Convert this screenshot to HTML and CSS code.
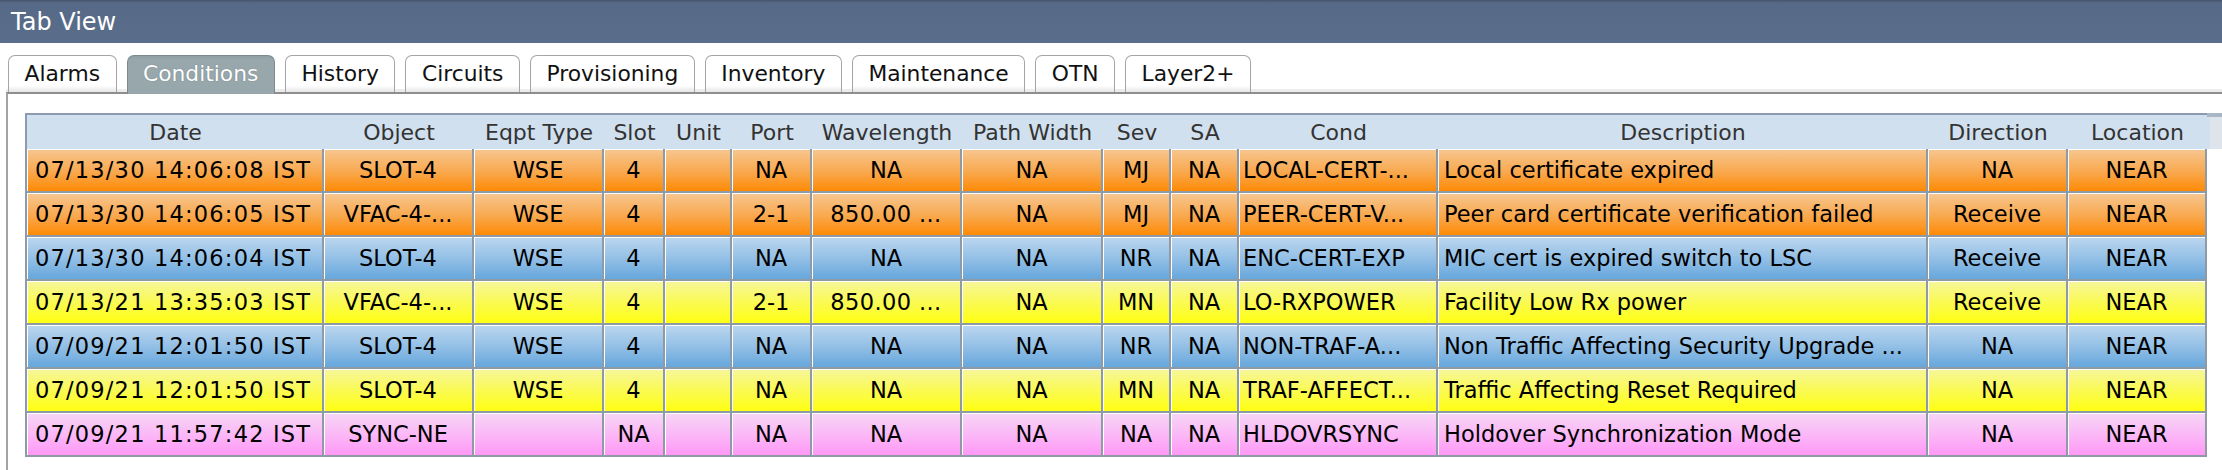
FILE: index.html
```html
<!DOCTYPE html>
<html>
<head>
<meta charset="utf-8">
<title>Tab View</title>
<link rel="stylesheet" href="styles.css">
</head>
<body>
<div class="window">
  <div class="titlebar">Tab View</div>
  <div class="tabs">
    <div class="tab">Alarms</div>
    <div class="tab selected">Conditions</div>
    <div class="tab">History</div>
    <div class="tab">Circuits</div>
    <div class="tab">Provisioning</div>
    <div class="tab">Inventory</div>
    <div class="tab">Maintenance</div>
    <div class="tab">OTN</div>
    <div class="tab">Layer2+</div>
  </div>
  <div class="panel">
    <div class="tablewrap">
      <table class="grid">
        <colgroup>
          <col class="c-date"><col class="c-object"><col class="c-eqpt"><col class="c-slot"><col class="c-unit"><col class="c-port"><col class="c-wave"><col class="c-path"><col class="c-sev"><col class="c-sa"><col class="c-cond"><col class="c-desc"><col class="c-dir"><col class="c-loc">
        </colgroup>
        <thead>
          <tr>
            <th>Date</th><th>Object</th><th>Eqpt Type</th><th>Slot</th><th>Unit</th><th>Port</th><th>Wavelength</th><th>Path Width</th><th>Sev</th><th>SA</th><th>Cond</th><th>Description</th><th>Direction</th><th>Location</th>
          </tr>
        </thead>
        <tbody>
          <tr class="mj">
            <td class="date">07/13/30 14:06:08 IST</td><td>SLOT-4</td><td>WSE</td><td>4</td><td></td><td>NA</td><td>NA</td><td>NA</td><td>MJ</td><td>NA</td><td class="left">LOCAL-CERT-...</td><td class="desc">Local certificate expired</td><td>NA</td><td>NEAR</td>
          </tr>
          <tr class="mj">
            <td class="date">07/13/30 14:06:05 IST</td><td>VFAC-4-...</td><td>WSE</td><td>4</td><td></td><td>2-1</td><td class="num">850.00 ...</td><td>NA</td><td>MJ</td><td>NA</td><td class="left">PEER-CERT-V...</td><td class="desc">Peer card certificate verification failed</td><td>Receive</td><td>NEAR</td>
          </tr>
          <tr class="nr">
            <td class="date">07/13/30 14:06:04 IST</td><td>SLOT-4</td><td>WSE</td><td>4</td><td></td><td>NA</td><td>NA</td><td>NA</td><td>NR</td><td>NA</td><td class="left">ENC-CERT-EXP</td><td class="desc">MIC cert is expired switch to LSC</td><td>Receive</td><td>NEAR</td>
          </tr>
          <tr class="mn">
            <td class="date">07/13/21 13:35:03 IST</td><td>VFAC-4-...</td><td>WSE</td><td>4</td><td></td><td>2-1</td><td class="num">850.00 ...</td><td>NA</td><td>MN</td><td>NA</td><td class="left">LO-RXPOWER</td><td class="desc">Facility Low Rx power</td><td>Receive</td><td>NEAR</td>
          </tr>
          <tr class="nr">
            <td class="date">07/09/21 12:01:50 IST</td><td>SLOT-4</td><td>WSE</td><td>4</td><td></td><td>NA</td><td>NA</td><td>NA</td><td>NR</td><td>NA</td><td class="left">NON-TRAF-A...</td><td class="desc">Non Traffic Affecting Security Upgrade ...</td><td>NA</td><td>NEAR</td>
          </tr>
          <tr class="mn">
            <td class="date">07/09/21 12:01:50 IST</td><td>SLOT-4</td><td>WSE</td><td>4</td><td></td><td>NA</td><td>NA</td><td>NA</td><td>MN</td><td>NA</td><td class="left">TRAF-AFFECT...</td><td class="desc">Traffic Affecting Reset Required</td><td>NA</td><td>NEAR</td>
          </tr>
          <tr class="na">
            <td class="date">07/09/21 11:57:42 IST</td><td>SYNC-NE</td><td></td><td>NA</td><td></td><td>NA</td><td>NA</td><td>NA</td><td>NA</td><td>NA</td><td class="left">HLDOVRSYNC</td><td class="desc">Holdover Synchronization Mode</td><td>NA</td><td>NEAR</td>
          </tr>
        </tbody>
      </table>
      <div class="corner"></div>
    </div>
  </div>
</div>
</body>
</html>
```

FILE: styles.css
```css
html, body {
  margin: 0;
  padding: 0;
  background: #ffffff;
}

body {
  font-family: "DejaVu Sans", "Noto Sans", sans-serif;
  width: 2222px;
  height: 470px;
  overflow: hidden;
}

.window {
  width: 2222px;
  height: 470px;
  display: flex;
  flex-direction: column;
}

.titlebar {
  height: 43px;
  box-sizing: border-box;
  background: linear-gradient(#44536d 0, #566a88 3px, #5a6e8c 100%);
  color: #ffffff;
  font-size: 24px;
  line-height: 45px;
  padding-left: 11px;
}

.tabs {
  display: flex;
  align-items: flex-end;
  gap: 10px;
  height: 49px;
  box-sizing: border-box;
  padding: 12px 0 0 8px;
  position: relative;
  z-index: 1;
}

.tab {
  height: 37px;
  box-sizing: border-box;
  padding: 0 15.5px;
  border: 1.5px solid #a5a5a5;
  border-bottom: none;
  border-radius: 7px 7px 0 0;
  background: linear-gradient(#ffffff 0, #ffffff 82%, #e6e6e6 100%);
  color: #111111;
  font-size: 21.8px;
  line-height: 36px;
  white-space: nowrap;
}

.tab.selected {
  height: 39px;
  margin-bottom: -2px;
  background: linear-gradient(#8f9fa4 0, #97a7ab 10%, #97a7ab 100%);
  border-color: #7c898d;
  color: #ffffff;
  text-shadow: 0 0 1px rgba(60, 70, 75, 0.5);
}

.panel {
  flex: 1;
  margin-left: 6px;
  border-top: 2px solid #8e8e8e;
  border-left: 2px solid #a3a3a3;
  box-shadow: 0 -3px 0 #ececec;
  padding: 19px 0 0 17px;
}

.tablewrap {
  display: flex;
  align-items: flex-start;
}

.grid {
  border-collapse: separate;
  border-spacing: 0;
  table-layout: fixed;
  width: 2182px;
  font-size: 22.5px;
}

.c-date { width: 299px; }
.c-object { width: 150px; }
.c-eqpt { width: 130px; }
.c-slot { width: 61px; }
.c-unit { width: 67px; }
.c-port { width: 80px; }
.c-wave { width: 150px; }
.c-path { width: 141px; }
.c-sev { width: 68px; }
.c-sa { width: 68px; }
.c-cond { width: 199px; }
.c-desc { width: 490px; }
.c-dir { width: 140px; }
.c-loc { width: 139px; }

.grid thead tr {
  height: 36px;
}

.grid th {
  background: #d1e0ee;
  border-top: 2px solid #8b9caf;
  color: #333333;
  font-size: 22px;
  font-weight: normal;
  text-align: center;
  padding: 0;
  white-space: nowrap;
  overflow: hidden;
}

.grid th:first-child {
  border-left: 2px solid #8b9caf;
}

.grid tbody tr {
  height: 44px;
}

.grid td {
  padding: 0 2px;
  text-align: center;
  color: #000000;
  white-space: nowrap;
  overflow: hidden;
  border-right: 2px solid #8e9ba7;
  border-bottom: 2px solid #8e9ba7;
  box-shadow: inset 1px 1px 0 #ffffff;
}

.grid td:first-child {
  border-left: 2px solid #8e9ba7;
}

.grid td.date {
  text-align: left;
  padding-left: 8px;
  letter-spacing: 1.2px;
}

.grid td.num {
  letter-spacing: 0.4px;
}

.grid td.left {
  text-align: left;
  padding-left: 4px;
}

.grid td.desc {
  text-align: left;
  padding-left: 6px;
}

.mj td {
  background: linear-gradient(#f6c791 0, #f9a84e 55%, #fe8a05 100%);
}

.nr td {
  background: linear-gradient(#bcd7ef 0, #94c0e6 50%, #66a7dc 100%);
}

.mn td {
  background: linear-gradient(#f6f69c 0, #fafa55 50%, #ffff12 100%);
}

.na td {
  background: linear-gradient(#f6d6f5 0, #fbb9f7 50%, #ff98f6 100%);
}

.corner {
  width: 15px;
  height: 36px;
  box-sizing: border-box;
  border-top: 4px solid #a9b6c4;
  background: linear-gradient(to right, #d1e0ee 0, #d1e0ee 3px, #dde4ec 3px);
}
```
